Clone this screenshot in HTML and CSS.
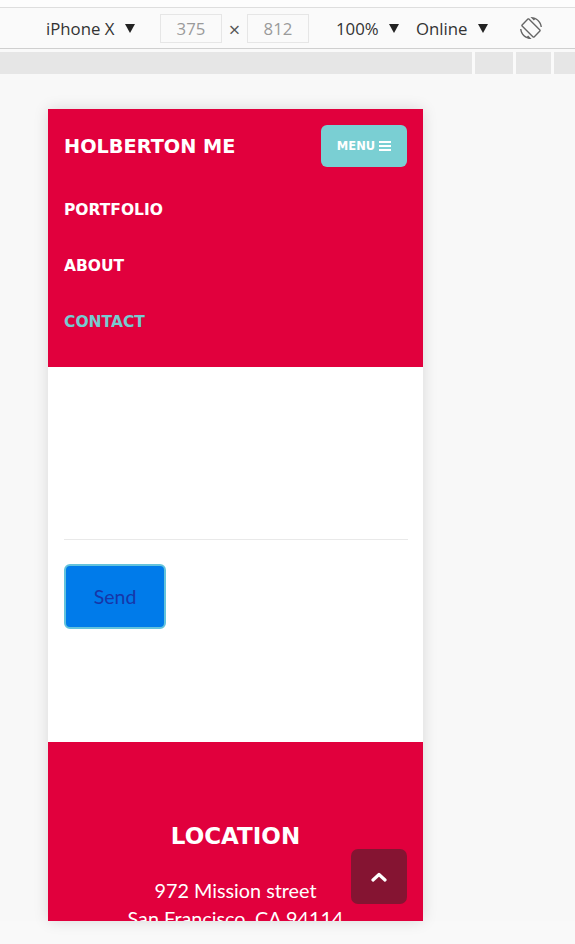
FILE: index.html
```html
<!DOCTYPE html>
<html>
<head>
<meta charset="utf-8">
<title>Holberton ME</title>
<link rel="stylesheet" href="styles.css">
</head>
<body>
<div class="topstrip"></div>
<div class="toolbar">
  <div class="device">iPhone X <svg class="tri" viewBox="0 0 10 9" width="10" height="9"><polygon points="0,0 10,0 5,9"/></svg></div>
  <div class="dims"><span class="dimbox">375</span><span class="times">×</span><span class="dimbox">812</span></div>
  <div class="zoomsel">100% <svg class="tri" viewBox="0 0 10 9" width="10" height="9"><polygon points="0,0 10,0 5,9"/></svg></div>
  <div class="netsel">Online <svg class="tri" viewBox="0 0 10 9" width="10" height="9"><polygon points="0,0 10,0 5,9"/></svg></div>
  <svg class="rotate" viewBox="0 0 24 24" width="22" height="22"><path d="M16.48 2.52c3.27 1.55 5.61 4.72 5.970 8.48h1.5C23.440 4.84 18.29 0 12 0l-.66.03 3.81 3.81 1.33-1.32zm-6.25-.77c-.59-.59-1.54-.59-2.12 0L1.75 8.11c-.59.59-.59 1.54 0 2.12l12.02 12.02c.59.59 1.54.59 2.12 0l6.36-6.360c.59-.59.59-1.54 0-2.12L10.23 1.75zm4.6 19.44L2.81 9.17l6.36-6.36 12.02 12.02-6.36 6.36zm-7.31.29C4.25 19.94 1.910 16.76 1.55 13H.05C.56 19.16 5.71 24 12 24l.66-.03-3.81-3.81-1.33 1.32z"/></svg>
</div>
<div class="ruler">
  <div class="seg seg1"></div>
  <div class="seg seg2"></div>
  <div class="seg seg3"></div>
  <div class="seg seg4"></div>
</div>
<div class="stage">
  <div class="phone">
    <header class="nav">
      <div class="brandrow">
        <span class="brand">HOLBERTON ME</span>
        <button class="menu">MENU <svg viewBox="0 0 12 10" width="12" height="10"><rect x="0" y="0" width="12" height="2"/><rect x="0" y="4" width="12" height="2"/><rect x="0" y="8" width="12" height="2"/></svg></button>
      </div>
      <ul class="links">
        <li>PORTFOLIO</li>
        <li>ABOUT</li>
        <li class="active">CONTACT</li>
      </ul>
    </header>
    <section class="contact">
      <div class="field"></div>
      <hr class="rule">
      <button class="send">Send</button>
    </section>
    <footer class="footer">
      <h2 class="loc">LOCATION</h2>
      <p class="addr">972 Mission street<br>San Francisco, CA 94114</p>
    </footer>
    <a class="totop"><svg viewBox="0 0 16 10" width="16" height="10"><polyline points="2,8 8,2.5 14,8"/></svg></a>
  </div>
</div>
</body>
</html>
```

FILE: styles.css
```css
html, body {
  margin: 0;
  padding: 0;
}
body {
  background: #f9f9f9;
  font-family: "Open Sans", "Noto Sans", sans-serif;
  height: 944px;
  overflow: hidden;
}
.topstrip {
  height: 7px;
  background: #fdfdfd;
  border-bottom: 1px solid #dedede;
}
.toolbar {
  height: 40px;
  background: #fafafa;
  border-bottom: 1px solid #cfcfcf;
  display: flex;
  align-items: center;
  padding-left: 46px;
  color: #333;
  font-size: 16.8px;
}
.tri {
  fill: #222;
  margin-left: 6px;
  vertical-align: 2px;
}
.device {
  width: 114px;
}
.dims {
  display: flex;
  align-items: center;
}
.dimbox {
  width: 60px;
  height: 27px;
  border: 1px solid #e6e6e6;
  background: #fafafa;
  color: #9a9a9a;
  display: flex;
  align-items: center;
  justify-content: center;
}
.times {
  width: 25px;
  text-align: center;
  color: #555;
  font-size: 20px;
  padding-top: 3px;
}
.zoomsel {
  margin-left: 27px;
  width: 80px;
}
.netsel {
  width: 104px;
}
.rotate {
  fill: #666;
}
.ruler {
  margin-top: 3px;
  height: 22px;
  display: flex;
  gap: 3px;
  background: #fafafa;
}
.seg {
  background: #e6e6e6;
}
.seg1 { width: 472px; }
.seg2 { width: 38px; }
.seg3 { width: 35px; }
.seg4 { flex: 1; }
.stage {
  padding-top: 35px;
  padding-left: 48px;
  background: #f8f8f8;
}
.phone {
  position: relative;
  width: 375px;
  height: 812px;
  overflow: hidden;
  background: #fff;
  box-shadow: 0 0 14px rgba(0, 0, 0, 0.13);
}
.nav {
  background: #e1003d;
  padding: 16px 16px 17px 16px;
  color: #fff;
  font-family: "DejaVu Sans", sans-serif;
  font-weight: bold;
}
.brandrow {
  height: 42px;
  display: flex;
  justify-content: space-between;
  align-items: center;
}
.brand {
  font-size: 19.3px;
}
.menu {
  width: 86px;
  height: 42px;
  border: none;
  border-radius: 6px;
  background: #7acfd3;
  color: #fff;
  font-family: "DejaVu Sans", sans-serif;
  font-weight: bold;
  font-size: 11.5px;
  display: flex;
  align-items: center;
  justify-content: center;
  gap: 4px;
  padding: 0;
}
.menu svg {
  fill: #fff;
}
.links {
  list-style: none;
  margin: 15px 0 0 0;
  padding: 0;
}
.links li {
  height: 56px;
  line-height: 56px;
  font-size: 15.5px;
}
.links li.active {
  color: #76cbd0;
}
.contact {
  height: 375px;
  padding: 0 15px 0 16px;
}
.field {
  height: 172px;
}
.rule {
  border: 0;
  border-top: 1px solid #e9e9e9;
  margin: 0;
}
.send {
  margin-top: 24px;
  width: 102px;
  height: 65px;
  background: #007bea;
  border: 2px solid #63c3dc;
  border-radius: 6px;
  color: #1736a8;
  font-family: Lato, sans-serif;
  font-size: 19.5px;
  padding: 0;
}
.footer {
  background: #e1003d;
  color: #fff;
  text-align: center;
  padding-top: 79px;
  height: 300px;
}
.loc {
  margin: 0;
  font-family: "DejaVu Sans", sans-serif;
  font-weight: bold;
  font-size: 23px;
  line-height: 30px;
}
.addr {
  margin: 25px 0 0 0;
  font-family: Lato, sans-serif;
  font-size: 19.8px;
  line-height: 28px;
}
.totop {
  position: absolute;
  right: 16px;
  bottom: 17px;
  width: 56px;
  height: 55px;
  border-radius: 7px;
  background: #851432;
  display: flex;
  align-items: center;
  justify-content: center;
}
.totop svg {
  fill: none;
  stroke: #fff;
  stroke-width: 3.2;
  stroke-linecap: round;
  stroke-linejoin: round;
}
```
